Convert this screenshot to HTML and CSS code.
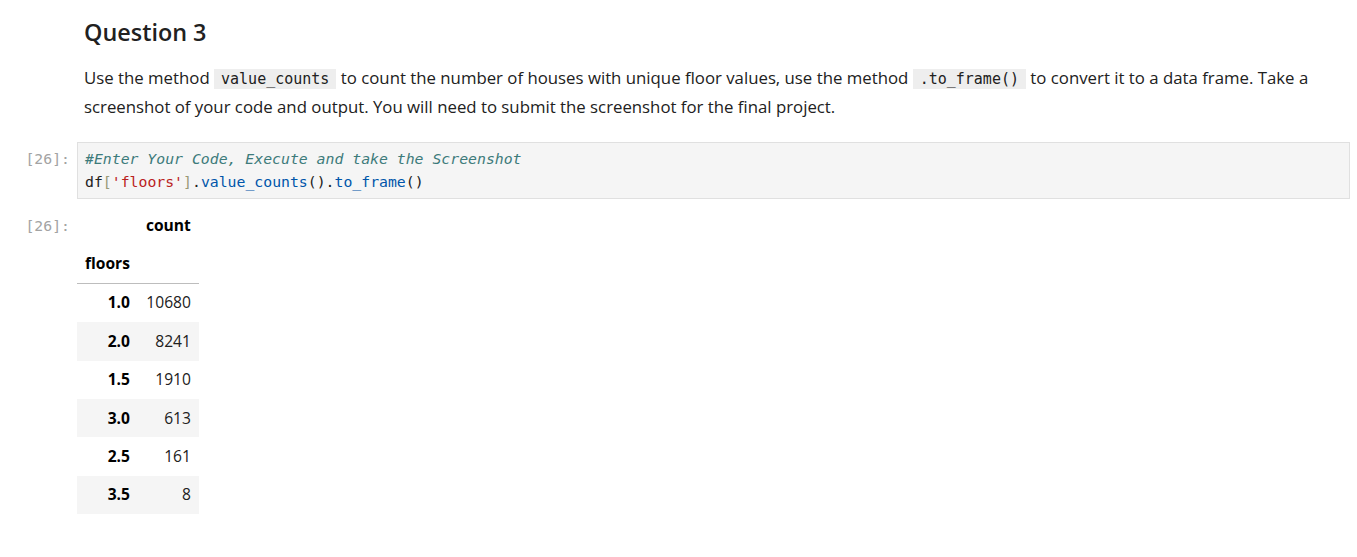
FILE: index.html
```html
<!DOCTYPE html>
<html lang="en">
<head>
<meta charset="utf-8">
<title>Question 3</title>
<link rel="stylesheet" href="styles.css">
</head>
<body>
<div class="notebook">
  <div class="cell md-cell">
    <div class="prompt"></div>
    <div class="md">
      <h2 class="heading">Question 3</h2>
      <p class="para">Use the method <code class="inline">value_counts</code> to count the number of houses with unique floor values, use the method <code class="inline">.to_frame()</code> to convert it to a data frame. Take a screenshot of your code and output. You will need to submit the screenshot for the final project.</p>
    </div>
  </div>

  <div class="cell code-cell">
    <div class="prompt">[26]:</div>
    <div class="input"><span class="c-comment">#Enter Your Code, Execute and take the Screenshot</span>
<span class="c-var">df</span><span class="c-br">[</span><span class="c-str">'floors'</span><span class="c-br">]</span>.<span class="c-prop">value_counts</span>().<span class="c-prop">to_frame</span>()</div>
  </div>

  <div class="cell out-cell">
    <div class="prompt">[26]:</div>
    <div class="output">
      <table class="df">
        <thead>
          <tr><th></th><th>count</th></tr>
          <tr><th class="idx-name">floors</th><th></th></tr>
        </thead>
        <tbody>
          <tr><th>1.0</th><td>10680</td></tr>
          <tr><th>2.0</th><td>8241</td></tr>
          <tr><th>1.5</th><td>1910</td></tr>
          <tr><th>3.0</th><td>613</td></tr>
          <tr><th>2.5</th><td>161</td></tr>
          <tr><th>3.5</th><td>8</td></tr>
        </tbody>
      </table>
    </div>
  </div>
</div>
</body>
</html>
```

FILE: styles.css
```css
html, body {
  margin: 0;
  padding: 0;
  background: #ffffff;
}

body {
  font-family: "Open Sans", "Noto Sans", sans-serif;
  color: #212121;
}

.notebook {
  width: 1350px;
  padding-top: 16px;
}

.cell {
  display: flex;
  align-items: flex-start;
}

.prompt {
  width: 70px;
  flex: 0 0 70px;
  margin-right: 7px;
  text-align: right;
  font-family: "DejaVu Sans Mono", monospace;
  font-size: 14.8px;
  color: #a3a3a3;
}

.md {
  flex: 1;
  padding-left: 7px;
}

.heading {
  margin: 0;
  font-size: 23.4px;
  line-height: 32px;
  font-weight: 600;
  color: #212121;
}

.para {
  margin: 16px 0 0 0;
  font-size: 16.8px;
  line-height: 28px;
  color: #212121;
}

.inline {
  font-family: "DejaVu Sans Mono", monospace;
  font-size: 15px;
  background: #eeeeee;
  padding: 1px 7px;
}

.code-cell {
  margin-top: 21px;
}

.code-cell .prompt {
  padding-top: 6px;
  line-height: 22.5px;
}

.input {
  flex: 1;
  background: #f5f5f5;
  border: 1px solid #e0e0e0;
  padding: 5px 7px;
  font-family: "DejaVu Sans Mono", monospace;
  font-size: 14.8px;
  line-height: 22.5px;
  white-space: pre;
  color: #212121;
}

.c-comment { color: #3d7b7b; font-style: italic; }
.c-str { color: #ba2121; }
.c-br { color: #999977; }
.c-prop { color: #0055aa; }
.c-var { color: #212121; }

.out-cell {
  margin-top: 7px;
}

.out-cell .prompt {
  padding-top: 8px;
  line-height: 23px;
}

.df {
  border-collapse: collapse;
  font-size: 15.6px;
  color: #212121;
}

.df th, .df td {
  padding: 7.7px 8px;
  line-height: 23px;
  text-align: right;
  white-space: nowrap;
}

.df th {
  font-weight: 700;
  color: #000000;
}

.df td {
  font-weight: 400;
}

.df thead tr:last-child th {
  border-bottom: 1px solid #bdbdbd;
}

.df .idx-name {
  text-align: left;
}

.df tbody tr:nth-child(even) {
  background: #f5f5f5;
}
```
